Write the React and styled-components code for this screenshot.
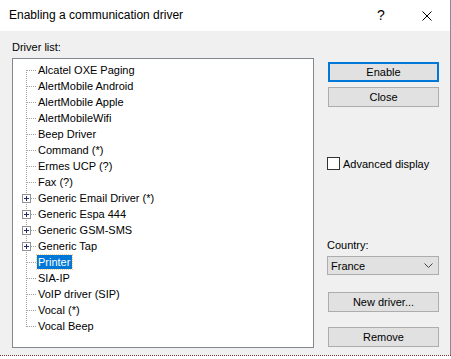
import React from "react";
import styled, { createGlobalStyle } from "styled-components";

const GlobalStyle = createGlobalStyle`
  html, body {
    margin: 0;
    padding: 0;
    background: #ffffff;
  }
  body {
    font-family: "Liberation Sans", Arial, sans-serif;
  }
`;

const Window = styled.div`
  width: 450px;
  height: 355px;
  display: flex;
  flex-direction: column;
  background: #f0f0f0;
  border-right: 1px solid #8c8c8c;
  box-sizing: content-box;
`;

const TitleBar = styled.div`
  height: 31px;
  display: flex;
  align-items: center;
  background: #ffffff;
  padding-left: 9px;
  flex-shrink: 0;
`;

const Title = styled.div`
  flex: 1;
  font-size: 12px;
  color: #000;
  padding-bottom: 1px;
`;

const HelpGlyph = styled.div`
  width: 46px;
  text-align: center;
  font-size: 14px;
  color: #000;
  padding-bottom: 1px;
`;

const CloseGlyph = styled.div`
  width: 46px;
  display: flex;
  justify-content: center;
  align-items: center;
`;

const Body = styled.div`
  flex: 1;
  display: flex;
  gap: 13px;
  padding: 10px 0 0 12px;
`;

const LeftCol = styled.div`
  display: flex;
  flex-direction: column;
`;

const Label = styled.div`
  font-size: 11px;
  color: #000;
  height: 17px;
  line-height: 13px;
  margin-top: ${({ $top }) => $top || 0}px;
`;

const TreeBox = styled.div`
  width: 300px;
  height: 285px;
  background: #ffffff;
  border: 1px solid #828790;
  padding-top: 3px;
  box-sizing: content-box;
`;

const Row = styled.div`
  height: 16px;
  display: flex;
  align-items: center;
`;

const ItemText = styled.span`
  font-size: 11px;
  line-height: 14px;
  height: 14px;
  padding: 0 2px 0 1px;
  color: ${({ $selected }) => ($selected ? "#ffffff" : "#000000")};
  background: ${({ $selected }) => ($selected ? "#0078d7" : "transparent")};
  outline: ${({ $selected }) => ($selected ? "1px dotted #f7c98b" : "none")};
  white-space: nowrap;
`;

const RightCol = styled.div`
  width: 112px;
  display: flex;
  flex-direction: column;
  padding-top: 21px;
`;

const Button = styled.button`
  width: 111px;
  height: 20px;
  margin: ${({ $top }) => $top || 0}px 0 0 1px;
  padding: 0;
  font-family: "Liberation Sans", Arial, sans-serif;
  font-size: 11px;
  color: #000;
  background: #e1e1e1;
  border: ${({ $default }) => ($default ? "2px solid #0078d7" : "1px solid #adadad")};
  box-sizing: border-box;
`;

const CheckRow = styled.label`
  display: flex;
  align-items: center;
  gap: 3px;
  margin-top: ${({ $top }) => $top || 0}px;
  font-size: 11px;
  color: #000;
`;

const CheckBox = styled.span`
  width: 13px;
  height: 13px;
  box-sizing: border-box;
  background: #fff;
  border: 1px solid #333;
`;

const Select = styled.div`
  width: 112px;
  height: 19px;
  box-sizing: border-box;
  background: #e1e1e1;
  border: 1px solid #adadad;
  display: flex;
  align-items: center;
  justify-content: space-between;
  padding: 0 5px 0 3px;
  font-size: 11px;
  color: #000;
`;

const BottomStrip = styled.div`
  width: 451px;
  height: 4px;
  border-top: 1px dotted #8a2a2a;
`;

const drivers = [
  { name: "Alcatel OXE Paging" },
  { name: "AlertMobile Android" },
  { name: "AlertMobile Apple" },
  { name: "AlertMobileWifi" },
  { name: "Beep Driver" },
  { name: "Command (*)" },
  { name: "Ermes UCP (?)" },
  { name: "Fax (?)" },
  { name: "Generic Email Driver (*)", plus: true },
  { name: "Generic Espa 444", plus: true },
  { name: "Generic GSM-SMS", plus: true },
  { name: "Generic Tap", plus: true },
  { name: "Printer", selected: true },
  { name: "SIA-IP" },
  { name: "VoIP driver (SIP)" },
  { name: "Vocal (*)" },
  { name: "Vocal Beep" },
];

const Connector = ({ first, last, plus }) => (
  <svg width="24" height="16" shapeRendering="crispEdges" style={{ flexShrink: 0 }}>
    <line
      x1="13.5"
      y1={first ? 8 : 0}
      x2="13.5"
      y2={last ? 9 : 16}
      stroke="#a0a0a0"
      strokeDasharray="1 1"
    />
    <line x1="14" y1="8.5" x2="24" y2="8.5" stroke="#a0a0a0" strokeDasharray="1 1" />
    {plus && (
      <g>
        <rect x="9.5" y="4.5" width="8" height="8" fill="#fff" stroke="#919191" />
        <line x1="11" y1="8.5" x2="16" y2="8.5" stroke="#1c2f6b" />
        <line x1="13.5" y1="6" x2="13.5" y2="11" stroke="#1c2f6b" />
      </g>
    )}
  </svg>
);

const App = () => {
  return (
    <>
      <GlobalStyle />
      <Window>
        <TitleBar>
          <Title>Enabling a communication driver</Title>
          <HelpGlyph>?</HelpGlyph>
          <CloseGlyph>
            <svg width="10" height="10" viewBox="0 0 10 10">
              <path d="M0.5 0.5 L9.5 9.5 M9.5 0.5 L0.5 9.5" stroke="#000" strokeWidth="1" />
            </svg>
          </CloseGlyph>
        </TitleBar>
        <Body>
          <LeftCol>
            <Label>Driver list:</Label>
            <TreeBox>
              {drivers.map((d, i) => (
                <Row key={d.name}>
                  <Connector first={i === 0} last={i === drivers.length - 1} plus={d.plus} />
                  <ItemText $selected={d.selected}>{d.name}</ItemText>
                </Row>
              ))}
            </TreeBox>
          </LeftCol>
          <RightCol>
            <Button $default>Enable</Button>
            <Button $top={5}>Close</Button>
            <CheckRow $top={50}>
              <CheckBox />
              Advanced display
            </CheckRow>
            <Label $top={69}>Country:</Label>
            <Select>
              <span>France</span>
              <svg width="9" height="5" viewBox="0 0 9 5">
                <path d="M0.5 0.5 L4.5 4.5 L8.5 0.5" fill="none" stroke="#444" />
              </svg>
            </Select>
            <Button $top={17}>New driver...</Button>
            <Button $top={15}>Remove</Button>
          </RightCol>
        </Body>
      </Window>
      <BottomStrip />
    </>
  );
};

export default App;
